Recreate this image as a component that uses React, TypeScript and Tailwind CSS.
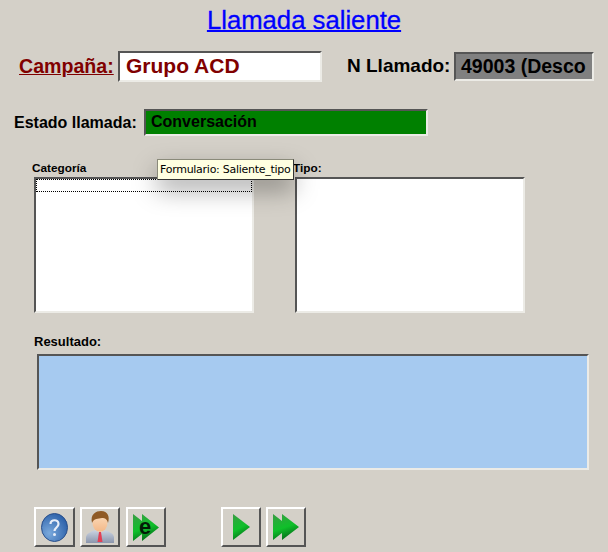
import React from "react";

const inset = "border-2 border-t-[#555] border-l-[#555] border-b-[#ecebe6] border-r-[#ecebe6]";
const btn = "w-[40px] h-[40px] flex items-center justify-center bg-[#d4d0c8] border-2 border-t-white border-l-white border-b-[#555] border-r-[#555]";

function Grad({ id }: { id: string }) {
  return (
    <linearGradient id={id} x1="0" y1="0" x2="0.35" y2="1">
      <stop offset="0" stopColor="#3a9c44" />
      <stop offset="0.6" stopColor="#0fc02a" />
      <stop offset="1" stopColor="#06701a" />
    </linearGradient>
  );
}

function Help() {
  return (
    <svg width="27" height="29" viewBox="0 0 27 29">
      <defs>
        <radialGradient id="h" cx="0.3" cy="0.7" r="0.85">
          <stop offset="0" stopColor="#7aa9dc" />
          <stop offset="1" stopColor="#2459a4" />
        </radialGradient>
      </defs>
      <ellipse cx="13.5" cy="14.5" rx="13" ry="14" fill="url(#h)" stroke="#2a4f8a" />
      <path d="M9.5 11 C9.5 6 17.5 6 17.5 11 C17.5 14.5 13.5 14.5 13.5 18" fill="none" stroke="#e8eef8" strokeWidth="2.2" />
      <circle cx="13.5" cy="21.5" r="1.5" fill="#e8eef8" />
    </svg>
  );
}

function Person() {
  return (
    <svg width="28" height="32" viewBox="0 0 28 32">
      <defs>
        <linearGradient id="s" x1="0" y1="0" x2="0" y2="1">
          <stop offset="0" stopColor="#ccd4e2" />
          <stop offset="1" stopColor="#8a95ac" />
        </linearGradient>
        <linearGradient id="sk" x1="0" y1="0" x2="0" y2="1">
          <stop offset="0" stopColor="#fbdcbc" />
          <stop offset="1" stopColor="#f3b888" />
        </linearGradient>
      </defs>
      <path d="M0 32 L0 26 C1 22 6 20 10 19 L18 19 C22 20 27 22 28 26 L28 32 Z" fill="url(#s)" />
      <path d="M10 19 L18 19 L14 22 Z" fill="#f0ecec" />
      <path d="M13 21 L15 21 L16.5 31 L11.5 31 Z" fill="#e23f55" />
      <ellipse cx="14" cy="12" rx="7.5" ry="9" fill="url(#sk)" />
      <path d="M6 12 C4 3 10 0 15 0 C22 0 24 6 22 12 C21 8 19 7 16 7 C12 8 8 7 6 12 Z" fill="#8f5a25" />
    </svg>
  );
}

function ForwardE() {
  return (
    <svg width="26" height="27" viewBox="0 0 26 27">
      <defs><Grad id="e1" /></defs>
      <path d="M0 0 L9 7 L9 0 L26 13.5 L9 27 L9 20 L0 27 Z" fill="url(#e1)" />
      <text x="6" y="20" fontSize="22" fontWeight="700" fill="#021a06" fontFamily="Liberation Sans">e</text>
    </svg>
  );
}

function Play() {
  return (
    <svg width="17" height="26" viewBox="0 0 17 26">
      <defs><Grad id="p1" /></defs>
      <path d="M0 0 L17 13 L0 26 Z" fill="url(#p1)" />
    </svg>
  );
}

function Forward() {
  return (
    <svg width="26" height="26" viewBox="0 0 26 26">
      <defs><Grad id="f1" /></defs>
      <path d="M0 0 L9 7 L9 0 L26 13 L9 26 L9 19 L0 26 Z" fill="url(#f1)" />
    </svg>
  );
}

export default function App() {
  return (
    <div className="relative w-[608px] h-[552px] overflow-hidden bg-[#d4d0c8] text-black font-['Liberation_Sans',Arial,sans-serif]">
      <div className="pt-[4px] h-[51px] flex justify-center">
        <span className="text-[25.7px] leading-[32px] text-[#0000ff] underline decoration-2 [-webkit-text-stroke:0.3px_#0000ff]">Llamada saliente</span>
      </div>

      <div className="flex items-center h-[31px] pl-[19px]">
        <span className="w-[99px] text-[19.6px] font-bold text-[#800000] underline whitespace-nowrap">Campaña:</span>
        <div className={`w-[204px] h-[31px] bg-white ${inset} pl-[6px] text-[21px] leading-[26px] font-bold text-[#800000]`}>Grupo ACD</div>
        <span className="ml-[25px] w-[107px] text-[19px] font-bold whitespace-nowrap">N Llamado:</span>
        <div className={`w-[140px] h-[29px] bg-[#808080] ${inset} pl-[5px] text-[19.5px] leading-[25px] font-bold whitespace-nowrap`}>49003 (Desco</div>
      </div>

      <div className="flex items-center h-[27px] mt-[27px] pl-[14px]">
        <span className="w-[130px] text-[16px] font-bold">Estado llamada:</span>
        <div className={`w-[284px] h-[27px] bg-[#008000] ${inset} pl-[5px] text-[16px] leading-[22px] font-bold`}>Conversación</div>
      </div>

      <div className="flex mt-[25px] pl-[32px]">
        <div className="w-[261px]">
          <div className="h-[16px] text-[11.8px] leading-[14px] font-bold">Categoría</div>
          <div className={`ml-[2px] w-[220px] h-[136px] bg-white ${inset}`}>
            <div className="h-[13px] border border-dotted border-black" />
          </div>
        </div>
        <div>
          <div className="h-[16px] text-[11.8px] leading-[14px] font-bold">Tipo:</div>
          <div className={`ml-[2px] w-[230px] h-[136px] bg-white ${inset}`} />
        </div>
      </div>

      <div className="mt-[21px] pl-[34px] h-[20px] text-[13px] leading-[16px] font-bold">Resultado:</div>
      <div className={`ml-[37px] w-[552px] h-[116px] bg-[#a6caf0] ${inset}`} />

      <div className="flex mt-[37px] pl-[34px]">
        <div className={`${btn} w-[41px]`}><Help /></div>
        <div className={`${btn} ml-[5px]`}><Person /></div>
        <div className={`${btn} ml-[6px]`}><ForwardE /></div>
        <div className={`${btn} ml-[55px]`}><Play /></div>
        <div className={`${btn} ml-[5px]`}><Forward /></div>
      </div>

      <div className="absolute left-[157px] top-[159px] w-[137px] h-[21px] bg-[#ffffe1] border border-[#8a8a7a] border-r-[#333] border-b-[#333] text-[11px] leading-[19px] pl-[2px] whitespace-nowrap shadow-[0_10px_24px_rgba(0,0,0,0.35)] font-['DejaVu_Sans',sans-serif] tracking-[-0.27px]">
        Formulario: Saliente_tipo
      </div>
    </div>
  );
}
